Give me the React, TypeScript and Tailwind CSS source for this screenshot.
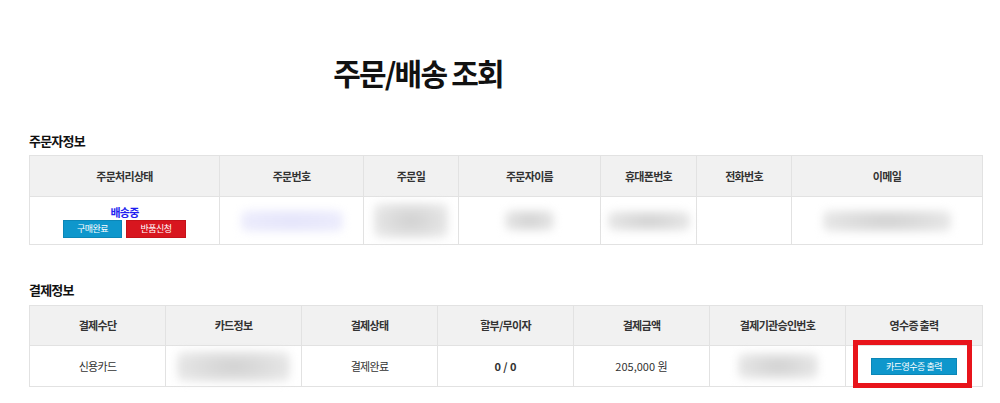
const font = "font-['Noto_Sans_CJK_KR','Noto_Sans',sans-serif]";

const Blur: React.FC<{ w: number; h: number; tone?: "gray" | "violet" }> = ({ w, h, tone = "gray" }) => (
  <div
    className={
      "mx-auto rounded-md blur-[4px] " +
      (tone === "violet"
        ? "bg-[radial-gradient(ellipse_at_center,#e4e4fb,#ececfc_70%,#f3f3fd)]"
        : "bg-[radial-gradient(ellipse_at_center,#d0d0d0,#e4e4e4_65%,#f1f1f1)]")
    }
    style={{ width: w, height: h }}
  />
);

const th =
  "border border-[#e2e2e2] bg-[#f1f1f1] text-[11px] tracking-[-0.7px] font-bold text-[#333] text-center align-middle";
const td =
  "border border-[#e2e2e2] bg-white text-[11px] tracking-[-0.7px] text-[#333] text-center align-middle";

const App: React.FC = () => {
  return (
    <div className={`w-[1000px] h-[403px] bg-white overflow-hidden ${font}`}>
      <div className="pt-[54px] flex justify-center pr-[164px]">
        <h1 className="text-[30px] leading-[36px] font-bold text-[#111] tracking-[-1.8px]">주문/배송 조회</h1>
      </div>

      <div className="ml-[29px] w-[953px]">
        <h2 className="mt-[41px] text-[13px] leading-[20px] font-bold tracking-[-0.8px] text-[#111]">주문자정보</h2>
        <table className="mt-[4px] w-[953px] border-collapse table-fixed">
          <colgroup>
            <col className="w-[190px]" />
            <col className="w-[144px]" />
            <col className="w-[95px]" />
            <col className="w-[142px]" />
            <col className="w-[96px]" />
            <col className="w-[95px]" />
            <col className="w-[191px]" />
          </colgroup>
          <thead>
            <tr className="h-[41px]">
              <th className={th}>주문처리상태</th>
              <th className={th}>주문번호</th>
              <th className={th}>주문일</th>
              <th className={th}>주문자이름</th>
              <th className={th}>휴대폰번호</th>
              <th className={th}>전화번호</th>
              <th className={th}>이메일</th>
            </tr>
          </thead>
          <tbody>
            <tr className="h-[48px]">
              <td className={td}>
                <div className="flex flex-col items-center pt-[1px]">
                  <span className="text-[11px] leading-[14px] font-bold tracking-[-0.8px] text-[#1f1ff0]">배송중</span>
                  <div className="flex gap-[4px] mt-[1px] tracking-[-0.5px]">
                    <button className="w-[59px] h-[18px] bg-[#0e97cc] border border-[#0b86b6] text-white text-[9px] leading-[16px]">
                      구매완료
                    </button>
                    <button className="w-[60px] h-[18px] bg-[#d8161f] border border-[#c41219] text-white text-[9px] leading-[16px]">
                      반품신청
                    </button>
                  </div>
                </div>
              </td>
              <td className={td}>
                <Blur w={102} h={22} tone="violet" />
              </td>
              <td className={td}>
                <Blur w={74} h={35} />
              </td>
              <td className={td}>
                <Blur w={49} h={21} />
              </td>
              <td className={td}>
                <Blur w={82} h={20} />
              </td>
              <td className={td}></td>
              <td className={td}>
                <Blur w={128} h={22} />
              </td>
            </tr>
          </tbody>
        </table>

        <h2 className="mt-[35px] text-[13px] leading-[20px] font-bold tracking-[-0.8px] text-[#111]">결제정보</h2>
        <table className="mt-[5px] w-[953px] border-collapse table-fixed">
          <colgroup>
            <col className="w-[136px]" />
            <col className="w-[136px]" />
            <col className="w-[136px]" />
            <col className="w-[136px]" />
            <col className="w-[136px]" />
            <col className="w-[136px]" />
            <col className="w-[137px]" />
          </colgroup>
          <thead>
            <tr className="h-[40px]">
              <th className={th}>결제수단</th>
              <th className={th}>카드정보</th>
              <th className={th}>결제상태</th>
              <th className={th}>할부/무이자</th>
              <th className={th}>결제금액</th>
              <th className={th}>결제기관승인번호</th>
              <th className={th}>영수증 출력</th>
            </tr>
          </thead>
          <tbody>
            <tr className="h-[41px]">
              <td className={td}>신용카드</td>
              <td className={td}>
                <Blur w={113} h={31} />
              </td>
              <td className={td}>결제완료</td>
              <td className={`${td} font-bold tracking-normal`}>0 / 0</td>
              <td className={`${td} tracking-normal`}>205,000 원</td>
              <td className={td}>
                <Blur w={80} h={26} />
              </td>
              <td className={`${td} relative`}>
                <button className="w-[86px] h-[17px] bg-[#0e97cc] border border-[#0b86b6] text-white text-[9px] leading-[15px] tracking-[-0.5px]">
                  카드영수증 출력
                </button>
                <div className="absolute left-[7px] right-[10px] top-[-6px] bottom-[-2px] border-[5px] border-[#e8141b] pointer-events-none" />
              </td>
            </tr>
          </tbody>
        </table>
      </div>
    </div>
  );
};

export default App;
